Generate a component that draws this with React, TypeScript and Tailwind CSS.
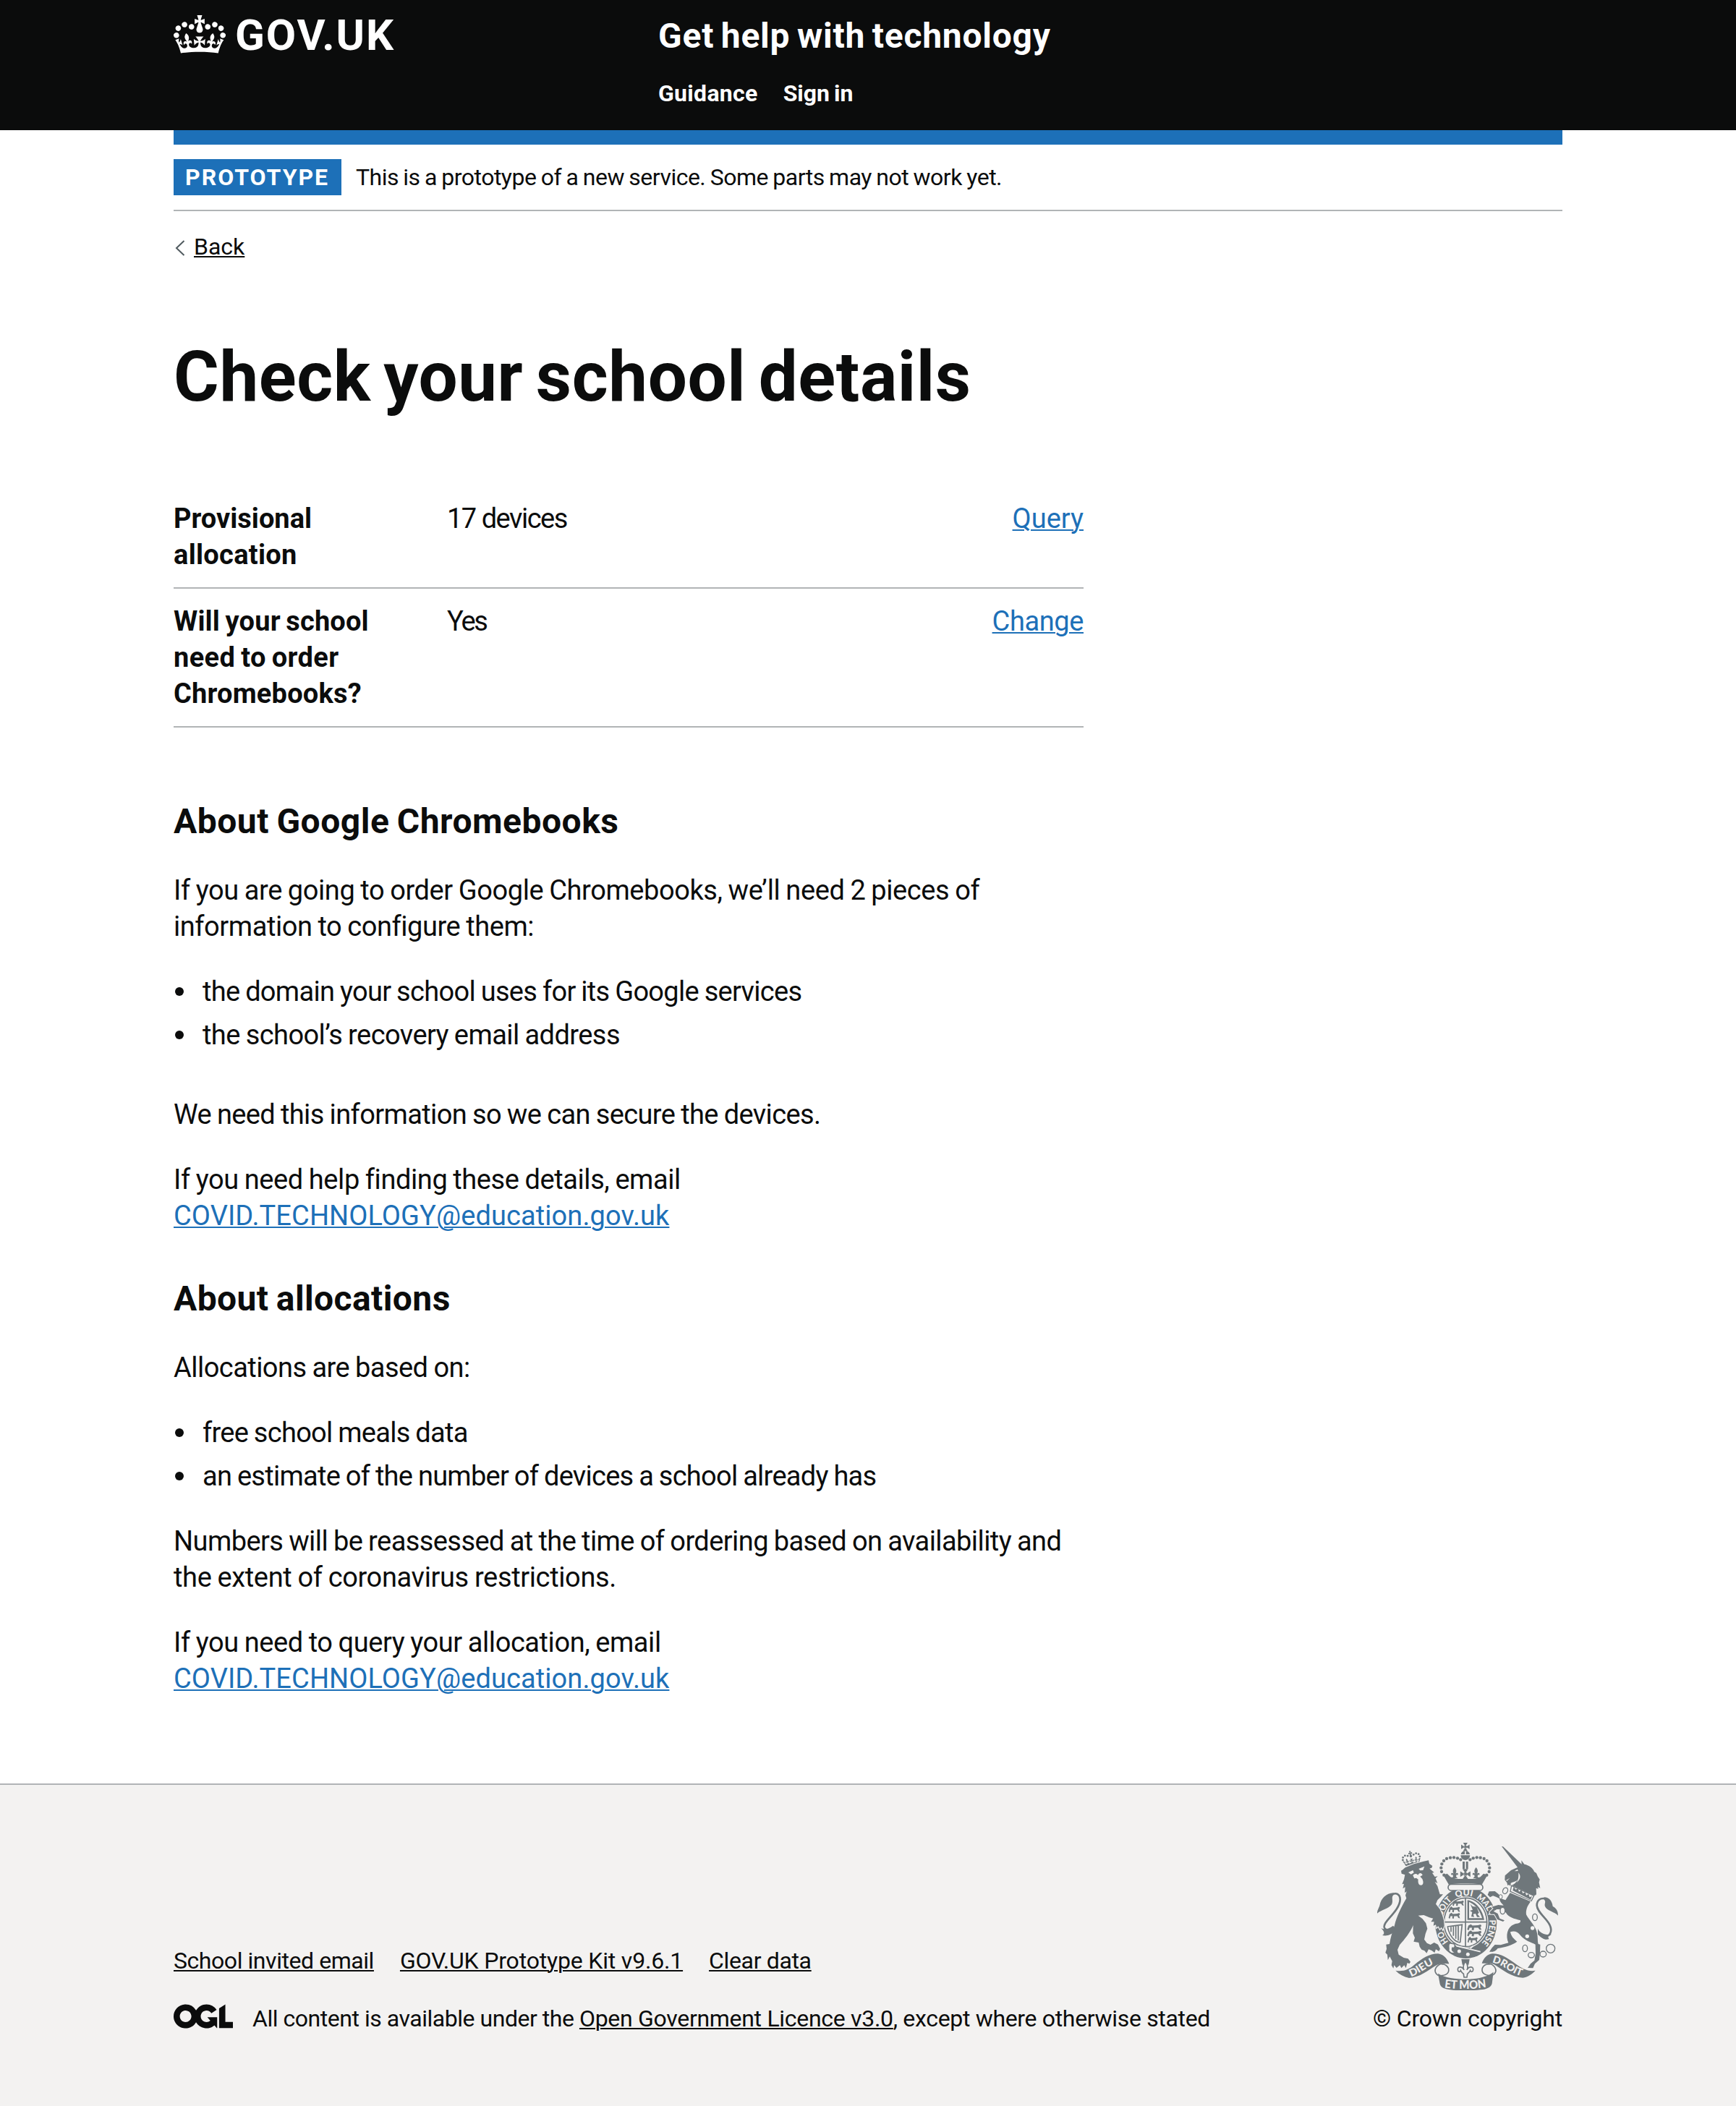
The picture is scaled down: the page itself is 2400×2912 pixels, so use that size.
import { type ReactNode } from "react";

const CROWN =
  "M25 30.2c3.5 1.5 7.7-.2 9.1-3.7 1.5-3.6-.2-7.8-3.9-9.2-3.6-1.4-7.6.3-9.1 3.9-1.4 3.5.3 7.5 3.9 9zM9 39.5c3.6 1.5 7.8-.2 9.2-3.7 1.5-3.6-.2-7.8-3.9-9.1-3.6-1.5-7.6.2-9.1 3.8-1.4 3.5.3 7.5 3.8 9zM4.4 57.2c3.5 1.5 7.7-.2 9.1-3.8 1.5-3.6-.2-7.7-3.9-9.1-3.5-1.5-7.6.3-9.1 3.8-1.4 3.5.3 7.6 3.9 9.1zm38.3-21.4c3.5 1.5 7.7-.2 9.1-3.8 1.5-3.6-.2-7.7-3.9-9.1-3.6-1.5-7.6.3-9.1 3.8-1.3 3.6.4 7.7 3.9 9.1zm64.4-5.6c-3.6 1.5-7.8-.2-9.1-3.7-1.5-3.6.2-7.8 3.8-9.2 3.6-1.4 7.7.3 9.2 3.9 1.3 3.5-.4 7.5-3.9 9zm15.9 9.3c-3.6 1.5-7.7-.2-9.1-3.7-1.5-3.6.2-7.8 3.7-9.1 3.6-1.5 7.7.2 9.2 3.8 1.5 3.5-.3 7.5-3.8 9zm4.7 17.7c-3.6 1.5-7.8-.2-9.2-3.8-1.5-3.6.2-7.7 3.9-9.1 3.6-1.5 7.7.3 9.2 3.8 1.3 3.5-.4 7.6-3.9 9.1zM89.3 35.8c-3.6 1.5-7.8-.2-9.2-3.8-1.4-3.6.2-7.7 3.9-9.1 3.6-1.5 7.7.3 9.2 3.8 1.4 3.6-.3 7.7-3.9 9.1zM69.7 17.7l8.9 4.7V9.3l-8.9 2.8c-.2-.3-.5-.6-.9-.9L72.4 0H59.6l3.5 11.2c-.3.3-.6.5-.9.9l-8.8-2.8v13.1l8.8-4.7c.3.3.6.7.9.9l-5 15.4v.1c-.2.8-.4 1.6-.4 2.4 0 4.1 3.1 7.5 7 8.1h.2c.3 0 .7.1 1 .1.4 0 .7 0 1-.1h.2c4-.6 7.1-4.1 7.1-8.1 0-.8-.1-1.7-.4-2.4V34l-5.1-15.4c.4-.2.7-.6 1-.9zM66 92.8c16.9 0 32.8 1.1 47.1 3.2 4-16.9 8.9-26.7 14-33.5l-9.6-3.4c1 4.9 1.1 7.2 0 10.2-1.5-1.4-3-4.3-4.2-8.7L108.6 76c2.8-2 5-3.2 7.5-3.3-4.4 9.4-10 11.9-13.6 11.2-4.3-.8-6.3-4.6-5.6-7.9 1-4.7 5.7-5.9 8-.5 4.3-8.7-3-11.4-7.6-8.8 7.1-7.2 7.9-13.5 2.1-21.1-8 6.1-8.1 12.3-4.5 20.8-4.7-5.4-12.1-2.5-9.5 6.2 3.4-5.2 7.9-2 7.2 3.1-.6 4.3-6.4 7.8-13.5 7.2-10.3-.9-10.9-8-11.2-13.8 2.5-.5 7.1 1.8 11 7.3L80.2 60c-4.1 4.4-8 5.3-12.3 5.4 1.4-4.4 8-11.6 8-11.6H55.5s6.4 7.2 7.9 11.6c-4.2-.1-8-1-12.3-5.4l1.4 16.4c3.9-5.5 8.5-7.7 10.9-7.3-.3 5.8-.9 12.8-11.1 13.8-7.2.6-12.9-2.9-13.5-7.2-.7-5 3.8-8.3 7.1-3.1 2.7-8.7-4.6-11.6-9.4-6.2 3.7-8.5 3.6-14.7-4.6-20.8-5.8 7.6-5 13.9 2.2 21.1-4.7-2.6-11.9.1-7.7 8.8 2.3-5.5 7.1-4.2 8.1.5.7 3.3-1.3 7.1-5.7 7.9-3.5.7-9-1.8-13.5-11.2 2.5.1 4.7 1.3 7.5 3.3l-4.7-15.4c-1.2 4.4-2.7 7.2-4.3 8.7-1.1-3-.9-5.3 0-10.2l-9.5 3.4c5 6.9 9.9 16.7 14 33.5 14.8-2.1 30.8-3.2 47.7-3.2z";

function Crest() {
  const G = "#6f777b";
  const W = "#f3f2f1";
  const arch = [
    [349, 188], [339, 174], [337, 158], [340, 142], [348, 129], [360, 120], [375, 116], [390, 115], [405, 118], [418, 124],
  ];
  const cross = "M0 -3 L-11 -20 H11 Z M0 3 L-11 20 H11 Z M-3 0 L-20 -11 V11 Z M3 0 L20 -11 V11 Z M-6 -6 H6 V6 H-6 Z";
  const fleur = "M0 -24 C9 -14 8 -6 4 2 C10 -4 18 0 13 8 L8 6 L6 14 L13 22 H-13 L-6 14 L-8 6 L-13 8 C-18 0 -10 -4 -4 2 C-8 -6 -9 -14 0 -24 Z";
  const beast = "M0 4 L6 0 L10 4 L24 3 C32 -2 34 6 29 8 L32 16 L27 15 L24 10 L14 10 L13 17 L8 16 L9 10 L3 10 L1 17 L-3 15 Z";
  return (
    <svg viewBox="72 54 750 612" className="mr-1.5 h-[204px] w-[250px]" fill={G}>
      {/* royal crown */}
      {arch.map(([x, y]) => (
        <g key={`${x}-${y}`}>
          <circle cx={x} cy={y} r="6.5" />
          <circle cx={875 - x} cy={y} r="6.5" />
        </g>
      ))}
      <path d={cross} transform="translate(437.5 71) scale(0.87)" />
      <path d="M418 106 H457 A19.5 20 0 0 1 418 106 Z M419 102 A19 17 0 0 1 435 88 V102 Z M440 88 A19 17 0 0 1 456 102 H440 Z" />
      <path d="M426 132 h9 v30 h-9 Z M440 132 h9 v30 h-9 Z" />
      <path d={cross} transform="translate(437.5 184) scale(1.05)" />
      <path d={fleur} transform="translate(393 180)" />
      <path d={fleur} transform="translate(482 180)" />
      <path d="M346 188 L362 182 L376 196 L400 204 H476 L500 196 L513 182 L529 188 L506 228 C470 220 405 220 369 228 Z" />
      {/* garter */}
      <ellipse cx="440" cy="386" rx="128" ry="148" />
      <rect x="366" y="226" width="144" height="26" rx="13" fill={W} stroke={G} strokeWidth="5" />
      <ellipse cx="438" cy="384" rx="95" ry="107" fill={W} />
      <ellipse cx="438" cy="384" rx="89" ry="101" fill="none" stroke={G} strokeWidth="5" />
      <path d="M438 282 V486 M349 383 H527" stroke={G} strokeWidth="5" />
      {[292, 318, 344].map((y) => (
        <path key={y} d={beast} transform={`translate(${y === 292 ? 388 : 372} ${y}) scale(1.35 1.45)`} />
      ))}
      {[392, 418, 444].map((y) => (
        <path key={y} d={beast} transform={`translate(450 ${y}) scale(${y === 444 ? 1.2 : 1.7} 1.45)`} />
      ))}
      <path d="M446 292 C480 296 508 330 516 374 H446 Z M453 300 V367 H507 C498 334 480 310 453 300 Z" fillRule="evenodd" />
      <path d="M458 308 L468 318 L484 320 L494 344 L488 350 L498 362 L486 362 L480 348 L470 350 L474 362 L462 360 L466 342 L456 336 L468 332 Z" />
      <path d="M362 402 L424 394 L416 468 M364 404 C372 440 392 466 416 468 M378 402 L378 424 M388 401 V440 M398 400 V452 M408 399 V460" fill="none" stroke={G} strokeWidth="5" />
      <defs>
        <path id="motto" d="M439 499 A99 113 0 0 1 439 273 A99 113 0 0 1 439 499" />
        <path id="dieu" d="M212 609 C250 598 282 562 326 553" />
        <path id="droit" d="M546 551 C592 556 624 598 676 608" />
        <path id="etmon" d="M348 654 Q440 668 530 652" />
      </defs>
      <g fill={W} className="font-['Lato'] text-[36px] font-black">
        <text><textPath href="#motto" startOffset="82" textLength="50" lengthAdjust="spacingAndGlyphs">HO</textPath></text>
        <text><textPath href="#motto" startOffset="196" textLength="76" lengthAdjust="spacingAndGlyphs">SOIT</textPath></text>
        <text><textPath href="#motto" startOffset="292" textLength="68" lengthAdjust="spacingAndGlyphs">QUI</textPath></text>
        <text><textPath href="#motto" startOffset="378" textLength="72" lengthAdjust="spacingAndGlyphs">MAL</textPath></text>
        <text><textPath href="#motto" startOffset="454" textLength="20" lengthAdjust="spacingAndGlyphs">Y</textPath></text>
        <text><textPath href="#motto" startOffset="488" textLength="104" lengthAdjust="spacingAndGlyphs">PENSE</textPath></text>
      </g>
      <path d="M400 482 L500 506 M458 492 L470 482" stroke={W} strokeWidth="5" />
      <circle cx="412" cy="504" r="7.5" fill={W} />
      <circle cx="448" cy="517" r="7.5" fill={W} />
      <path d="M374 470 C362 478 372 490 368 502 C376 514 388 516 394 508 C384 504 380 498 384 490 C392 492 398 486 392 474 Z" fill={W} stroke={G} strokeWidth="5" />
      {/* lion supporter */}
      <g transform="translate(60 30)">
        <path d={CROWN} transform="rotate(-12 153 88) translate(113 58) scale(0.61 0.6)" />
        <path
          d="M111 140 L118 136 L128 127 L165 112 L205 101 L225 97 L228 111 L241 120 L238 128 L229 131 L248 147 L240 149 L251 165 L263 163 L254 172 L262 192 L251 186 L262 204 L268 225 L272 238 L285 238 L276 248 L262 262 L255 278 L272 300 L282 325 L288 345 L290 368 L284 384 L278 374 L272 382 L265 370 L258 376 L255 364 L245 368 L248 352 L235 352 L244 338 L228 334 L205 324 L182 326 L200 340 L214 358 L220 380 L212 402 L207 425 L218 440 L233 447 L248 438 L264 446 L273 464 L268 474 L255 466 L250 480 L238 471 L225 466 L217 482 L208 472 L196 467 L188 455 L184 438 L163 434 L168 418 L160 400 L161 366 C150 395 125 425 105 448 L96 468 L101 488 L122 501 L140 505 L150 518 L145 526 L137 522 L131 544 L124 532 L112 544 L106 532 L92 543 L82 532 L79 545 L71 532 L74 515 L64 496 L56 511 L54 488 L46 480 L51 464 L49 446 L63 444 C66 420 75 395 84 366 C92 330 112 290 133 254 L129 242 L134 226 L126 232 L128 208 L118 214 L123 194 L115 196 L123 176 L127 157 L113 152 Z"
          stroke={W}
          strokeWidth="7"
          style={{ paintOrder: "stroke" }}
        />
        <path d="M141 147 L160 138 L164 148 L152 155 Z M184 132 L208 122 L202 138 L190 139 Z M160 160 C166 150 176 152 181 158 C186 147 196 148 200 158 L190 164 L199 174 C206 190 202 200 194 200 C184 200 180 190 182 176 L174 170 L166 172 Z" fill={W} />
        <path d="M72 384 C38 390 32 372 54 346 C78 318 106 290 107 260 C107 236 90 229 70 240" fill="none" stroke={G} strokeWidth="8" />
        <path d="M80 232 C48 234 28 254 22 284 C17 298 12 304 12 317 C30 302 60 298 72 280 C80 262 68 250 80 240 Z M28 378 C40 386 60 382 78 368 L90 384 C72 408 50 412 33 408 C44 402 42 392 28 378 Z" />
      </g>
      {/* unicorn supporter */}
      <g transform="translate(420 30)">
        <path d="M168 39 L174 40 L251 113 L250 97 L262 113 C280 116 300 130 303 144 L312 150 L318 164 L326 176 L323 188 L328 212 L318 208 L320 216 L311 212 L312 238 C306 246 300 242 294 240 L210 200 C218 198 228 190 234 178 C226 186 214 188 206 191 L205 204 L198 198 L193 202 L190 190 L181 178 L182 160 L207 138 L234 126 Z" />
        <path d="M221 142 L234 134 L236 141 Z M238 148 C246 160 250 172 230 190 C240 172 238 160 238 148 Z M186 180 L202 170 L190 182 Z" fill={W} />
        <path d="M209 202 L302 244 L291 266 L204 226 Z" fill={W} stroke={G} strokeWidth="4" />
        <path d="M214 222 L218 206 L226 218 L236 214 L240 228 L250 220 L256 234 L266 228 L270 242 L280 236 L284 250 L294 246 L288 260 Z" />
        <path
          d="M203 232 L288 268 C274 288 268 302 270 322 C278 340 302 362 312 388 C320 412 316 430 320 444 L328 446 L327 480 L324 510 L306 526 L298 544 L276 543 L288 526 L304 512 L309 484 L308 446 C292 438 262 430 244 406 C234 394 222 388 204 394 C208 414 218 422 232 434 C210 450 178 458 152 462 C140 478 128 477 117 476 L128 460 L140 447 L164 448 L196 439 C184 410 190 374 220 362 C236 357 248 360 246 346 C220 338 196 334 186 314 L168 300 L148 300 L134 308 L152 318 L160 338 L180 346 L174 351 L150 342 L138 320 L122 320 L118 312 L134 296 L126 290 L154 282 L176 284 C164 272 158 262 160 256 L144 248 L132 244 L120 250 L110 240 L116 226 L140 225 L156 238 L166 256 L184 262 Z"
          stroke={W}
          strokeWidth="6"
          style={{ paintOrder: "stroke" }}
        />
        <g fill="none" stroke={G} strokeWidth="4">
          <ellipse cx="183" cy="223" rx="10" ry="13" transform="rotate(25 183 223)" />
          <ellipse cx="306" cy="333" rx="10" ry="14" />
          <ellipse cx="265" cy="462" rx="10" ry="14" />
          <ellipse cx="291" cy="490" rx="13" ry="11" />
          <ellipse cx="340" cy="486" rx="13" ry="12" />
          <circle cx="371" cy="463" r="18" />
        </g>
        <g fill={W}>
          <circle cx="296" cy="378" r="8" />
          <circle cx="274" cy="412" r="8" />
          <ellipse cx="164" cy="248" rx="7" ry="9" stroke={G} strokeWidth="3" />
          <ellipse cx="172" cy="306" rx="10" ry="14" stroke={G} strokeWidth="4" />
        </g>
        <path d="M340 410 C368 418 380 392 368 366 C354 336 316 314 314 284 C314 262 328 252 350 256" fill="none" stroke={G} strokeWidth="8" />
        <path d="M344 250 C366 250 378 268 380 288 C392 294 402 304 402 326 C388 310 354 306 348 288 C344 276 354 268 344 260 Z M318 380 C326 398 346 408 376 404 L360 412 L364 424 C346 430 330 416 318 404 Z" />
      </g>
      {/* pendant */}
      <path d="M421 537 H455 L451 560 H425 Z" />
      <path d="M438 546 C450 562 448 574 444 582 C452 566 470 566 470 580 C470 590 460 592 458 584 C454 592 448 596 446 598 L444 612 H432 L430 598 C426 596 422 592 418 584 C416 592 406 590 406 580 C406 566 424 566 432 582 C428 574 426 562 438 546 Z" fill={W} stroke={G} strokeWidth="5" />
      {/* ribbons */}
      <path d="M148 584 C180 590 206 578 226 560 C258 535 286 514 324 514 C350 518 362 536 370 556 C348 550 332 554 314 564 C282 584 250 612 204 615 C182 610 164 600 148 584 Z" />
      <path d="M728 584 C700 590 672 576 648 558 C612 532 586 514 550 514 C526 516 514 534 506 554 C528 548 546 552 562 562 C594 582 628 612 676 614 C698 610 712 600 728 584 Z" />
      <g fill={W} stroke={G} strokeWidth="5">
        <path d="M368 554 C336 548 312 566 312 586 C314 598 322 604 332 606 C348 604 372 602 368 576 C360 560 350 556 338 558" />
        <path d="M508 552 C542 548 564 566 564 586 C562 598 552 604 540 606 C522 602 502 598 508 574 C514 560 526 556 540 558" />
      </g>
      <path d="M324 596 C350 614 400 620 440 620 C480 620 528 612 554 590 L548 638 C544 656 520 662 500 664 C460 668 410 668 375 664 C350 660 336 656 332 640 Z" />
      <g fill={W} className="font-['Lato'] font-black">
        <text className="text-[42px]"><textPath href="#dieu" startOffset="0" textLength="108" lengthAdjust="spacingAndGlyphs">DIEU</textPath></text>
        <text className="text-[42px]"><textPath href="#droit" startOffset="2" textLength="134" lengthAdjust="spacingAndGlyphs">DROIT</textPath></text>
        <text className="text-[48px]"><textPath href="#etmon" startOffset="2" textLength="176" lengthAdjust="spacingAndGlyphs">ET MON</textPath></text>
      </g>
    </svg>
  );
}

function OglLogo() {
  return (
    <svg viewBox="0 0 483.2 195.7" className="mr-[27px] h-[34px] w-[82px] shrink-0" fill="#0b0c0c">
      <path d="M421.5 142.8V.1l-50.7 32.3v161.1h112.4v-50.7zm-122.3-9.6A47.12 47.12 0 0 1 221 97.8c0-26 21.1-47.1 47.1-47.1 16.7 0 31.4 8.7 39.7 21.8l42.7-27.2A97.63 97.63 0 0 0 268.1 0c-36.5 0-68.3 20.1-85.1 49.7A98 98 0 0 0 97.8 0C43.9 0 0 43.9 0 97.8s43.9 97.8 97.8 97.8c36.5 0 68.3-20.1 85.1-49.7a97.76 97.76 0 0 0 149.6 25.4l19.4 22.2h3v-87.8h-80l24.3 27.5zM97.8 145c-26 0-47.1-21.1-47.1-47.1s21.1-47.1 47.1-47.1 47.1 21.1 47.1 47.1S123.8 145 97.8 145" />
    </svg>
  );
}

const underline = "underline decoration-2 underline-offset-[2px]";

function Bullet({ children }: { children: ReactNode }) {
  return (
    <li className="flex items-center">
      <span className="mr-[26px] ml-0.5 size-3 rounded-full bg-[#0b0c0c]" />
      {children}
    </li>
  );
}

function Email() {
  return (
    <a className={`${underline} block w-fit tracking-[0.09px] [word-spacing:0px] text-[#1d70b8]`}>COVID.TECHNOLOGY@education.gov.uk</a>
  );
}

export default function App() {
  return (
    <div className="min-h-[2912px] bg-white font-['Roboto',sans-serif] text-[#0b0c0c]">
      <header className="h-[180px] bg-[#0b0c0c] font-bold text-white">
        <div className="mx-auto flex w-[1920px]">
          <div className="flex h-[98px] w-[670px] pt-[21px]">
            <svg viewBox="0 0 132 97" className="h-[53px] w-[72px]" fill="currentColor" fillRule="evenodd">
              <path d={CROWN} />
            </svg>
            <span className="-mt-2 ml-[13px] text-[60px] leading-[72px] tracking-[1.9px]">GOV.UK</span>
          </div>
          <div>
            <div className="mt-5 text-[48px] leading-[60px] tracking-[0.75px] [word-spacing:-3px]">Get help with technology</div>
            <nav className="mt-[29px] flex gap-[35px] text-[32px] leading-10">
              <span className="tracking-[0.3px]">Guidance</span>
              <span className="tracking-[0px] [word-spacing:-2px]">Sign in</span>
            </nav>
          </div>
        </div>
      </header>

      <div className="mx-auto w-[1920px]">
        <div className="h-5 bg-[#1d70b8]" />
        <div className="flex h-[92px] items-center border-b-2 border-[#b1b4b6] text-[32px] leading-[50px]">
          <strong className="w-[232px] bg-[#1d70b8] pl-4 font-bold tracking-[2px] text-white">PROTOTYPE</strong>
          <span className="ml-5 tracking-[-0.52px] [word-spacing:-1px]">This is a prototype of a new service. Some parts may not work yet.</span>
        </div>
        <a className="mt-[29px] flex h-10 items-center text-[32px] leading-10">
          <svg viewBox="0 0 14 22" className="mt-1 mr-3 ml-0.5 h-[22px] w-[14px]" fill="none" stroke="#505a5f" strokeWidth="2">
            <path d="M12.5 1 L2 11 L12.5 21" />
          </svg>
          <span className={underline}>Back</span>
        </a>

        <main className="w-[1258px] pt-[110px] text-[38px] leading-[50px]">
          <h1 className="text-[96px] leading-[100px] font-bold tracking-[0.6px] [word-spacing:-7px]">Check your school details</h1>
          <dl className="mt-[101px] pt-5">
            <div className="flex border-b-2 border-[#b1b4b6] pb-5">
              <dt className="w-[378px] font-bold tracking-[0px]">Provisional<br /><span className="tracking-[0.3px]">allocation</span></dt>
              <dd className="flex-1 tracking-[-1.5px]">17 devices</dd>
              <dd className={`${underline} self-start text-[#1d70b8]`}>Query</dd>
            </div>
            <div className="flex border-b-2 border-[#b1b4b6] py-5">
              <dt className="w-[378px] font-bold tracking-[0.15px] [word-spacing:-2px]">
                Will your school<br /><span className="tracking-[0.4px]">need to order</span><br /><span className="tracking-[0.2px]">Chromebooks?</span>
              </dt>
              <dd className="flex-1 tracking-[-2.2px]">Yes</dd>
              <dd className={`${underline} self-start tracking-[-0.4px] text-[#1d70b8]`}>Change</dd>
            </div>
          </dl>

          <h2 className="mt-[100px] text-[48px] leading-[60px] font-bold tracking-[0.5px] [word-spacing:-2px]">About Google Chromebooks</h2>
          <div className="[word-spacing:-1px]">
            <p className="mt-10 whitespace-nowrap">
              <span className="tracking-[-0.42px]">If you are going to order Google Chromebooks, we’ll need 2 pieces of</span><br />
              <span className="tracking-[-0.44px]">information to configure them:</span>
            </p>
            <ul className="mt-10 flex flex-col gap-2.5">
              <Bullet><span className="tracking-[-0.7px]">the domain your school uses for its Google services</span></Bullet>
              <Bullet><span className="tracking-[-0.57px]">the school’s recovery email address</span></Bullet>
            </ul>
            <p className="mt-[60px] tracking-[-0.61px]">We need this information so we can secure the devices.</p>
            <p className="mt-10">
              <span className="tracking-[-0.42px]">If you need help finding these details, email</span>
              <Email />
            </p>
          </div>

          <h2 className="mt-[60px] text-[48px] leading-[60px] font-bold tracking-[0.4px] [word-spacing:-2px]">About allocations</h2>
          <div className="[word-spacing:-1px]">
            <p className="mt-10 tracking-[-0.54px]">Allocations are based on:</p>
            <ul className="mt-10 flex flex-col gap-2.5">
              <Bullet><span className="tracking-[-0.72px]">free school meals data</span></Bullet>
              <Bullet><span className="tracking-[-0.73px]">an estimate of the number of devices a school already has</span></Bullet>
            </ul>
            <p className="mt-10 whitespace-nowrap">
              <span className="tracking-[-0.58px]">Numbers will be reassessed at the time of ordering based on availability and</span><br />
              <span className="tracking-[-0.36px]">the extent of coronavirus restrictions.</span>
            </p>
            <p className="mt-10">
              <span className="tracking-[-0.43px]">If you need to query your allocation, email</span>
              <Email />
            </p>
          </div>
        </main>
      </div>

      <footer className="mt-[120px] h-[446px] border-t-2 border-[#b1b4b6] bg-[#f3f2f1] pt-20 text-[32px] leading-10">
        <div className="mx-auto flex w-[1920px] items-end justify-between">
          <div>
            <div className="flex gap-9">
              <span className={`${underline} tracking-[-0.44px]`}>School invited email</span>
              <span className={`${underline} tracking-[-0.18px]`}>GOV.UK Prototype Kit v9.6.1</span>
              <span className={`${underline} tracking-[-0.35px]`}>Clear data</span>
            </div>
            <div className="mt-10 flex">
              <OglLogo />
              <span className="tracking-[-0.47px] whitespace-pre">
                {"All content is available under the "}
                <span className={`${underline} tracking-[-0.3px]`}>Open Government Licence v3.0</span>
                <span className="tracking-[-0.33px]">, except where otherwise stated</span>
              </span>
            </div>
          </div>
          <div className="flex flex-col items-end">
            <Crest />
            <span className="mt-[19px] tracking-[-0.18px]">© Crown copyright</span>
          </div>
        </div>
      </footer>
    </div>
  );
}
